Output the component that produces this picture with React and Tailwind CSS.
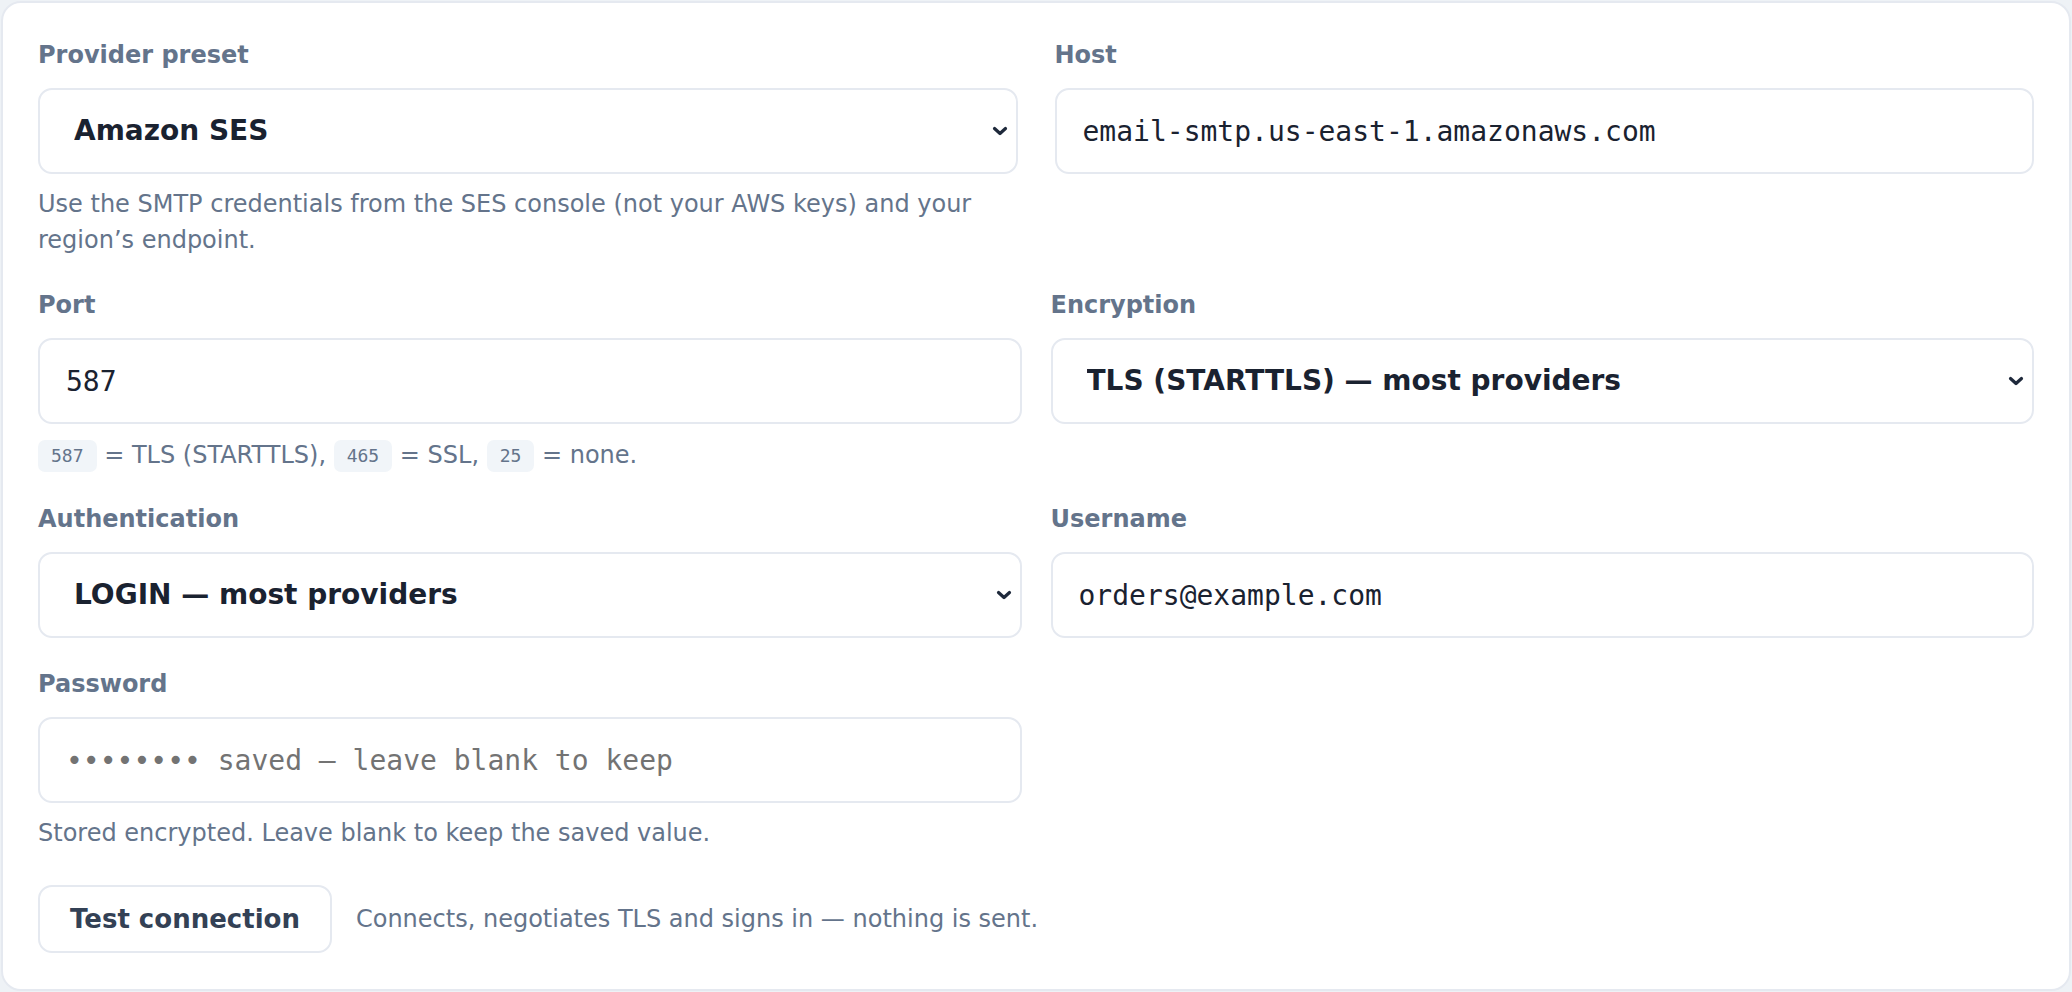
import React from "react";

function Chevron() {
  return (
    <svg
      className="pointer-events-none absolute right-[10px] top-1/2 -translate-y-1/2"
      width="16"
      height="10"
      viewBox="0 0 16 10"
      fill="none"
    >
      <path d="M2.5 2.5l5.5 5 5.5-5" stroke="#1e293b" strokeWidth="3.2" strokeLinecap="round" strokeLinejoin="round" />
    </svg>
  );
}

function Label({ children }) {
  return <label className="block text-[24px] leading-[34px] font-bold text-[#64748b]">{children}</label>;
}

function Select({ value, options }) {
  return (
    <div className="relative mt-4">
      <select
        defaultValue={value}
        className="h-[86px] w-full appearance-none rounded-[14px] border-2 border-[#e5e9f0] bg-white pl-[34px] pr-10 text-[28px] font-bold text-[#1a2230] outline-none"
      >
        {options.map((o) => (
          <option key={o}>{o}</option>
        ))}
      </select>
      <Chevron />
    </div>
  );
}

function TextInput({ value, placeholder }) {
  return (
    <input
      type="text"
      defaultValue={value}
      placeholder={placeholder}
      className="mt-4 block h-[86px] w-full rounded-[14px] border-2 border-[#e5e9f0] bg-white px-[26px] font-['DejaVu_Sans_Mono',monospace] text-[28px] text-[#1a2230] outline-none placeholder:text-[#737373]"
    />
  );
}

function Code({ children }) {
  return (
    <code className="inline-block h-[32px] rounded-[7px] bg-[#f1f5f9] px-[13px] align-middle font-['DejaVu_Sans_Mono',monospace] text-[18px] leading-[32px] text-[#64748b]">
      {children}
    </code>
  );
}

export default function App() {
  return (
    <div className="min-h-screen bg-[#eef2f6] p-px font-['DejaVu_Sans',sans-serif]">
      <div className="rounded-[20px] border-2 border-[#e5e9f0] bg-white px-[35px] pt-[35px] pb-[36px]">
        <div className="grid grid-cols-2 gap-x-[37px]">
          <div>
            <Label>Provider preset</Label>
            <Select value="Amazon SES" options={["Amazon SES", "SendGrid", "Mailgun", "Postmark", "Custom"]} />
            <p className="mt-3 text-[24px] leading-[36px] text-[#64748b]">
              Use the SMTP credentials from the SES console (not your AWS keys) and your region’s endpoint.
            </p>
          </div>
          <div>
            <Label>Host</Label>
            <TextInput value="email-smtp.us-east-1.amazonaws.com" />
          </div>
        </div>

        <div className="mt-[30px] grid grid-cols-2 gap-x-[29px] gap-y-[29px]">
          <div>
            <Label>Port</Label>
            <TextInput value="587" />
            <p className="mt-[14px] text-[24px] leading-[35px] text-[#64748b]">
              <Code>587</Code> = TLS (STARTTLS), <Code>465</Code> = SSL, <Code>25</Code> = none.
            </p>
          </div>
          <div>
            <Label>Encryption</Label>
            <Select
              value="TLS (STARTTLS) — most providers"
              options={["TLS (STARTTLS) — most providers", "SSL/TLS", "None"]}
            />
          </div>

          <div>
            <Label>Authentication</Label>
            <Select value="LOGIN — most providers" options={["LOGIN — most providers", "PLAIN", "CRAM-MD5"]} />
          </div>
          <div>
            <Label>Username</Label>
            <TextInput value="orders@example.com" />
          </div>

          <div>
            <Label>Password</Label>
            <TextInput placeholder="•••••••• saved — leave blank to keep" />
            <p className="mt-3 text-[24px] leading-[36px] text-[#64748b]">
              Stored encrypted. Leave blank to keep the saved value.
            </p>
          </div>
          <div />
        </div>

        <div className="mt-[34px] flex items-center gap-[24px]">
          <button className="h-[68px] rounded-[14px] border-2 border-[#e5e9f0] bg-white px-[30px] text-[26px] font-bold text-[#334155]">
            Test connection
          </button>
          <span className="text-[24px] text-[#64748b]">Connects, negotiates TLS and signs in — nothing is sent.</span>
        </div>
      </div>
    </div>
  );
}
